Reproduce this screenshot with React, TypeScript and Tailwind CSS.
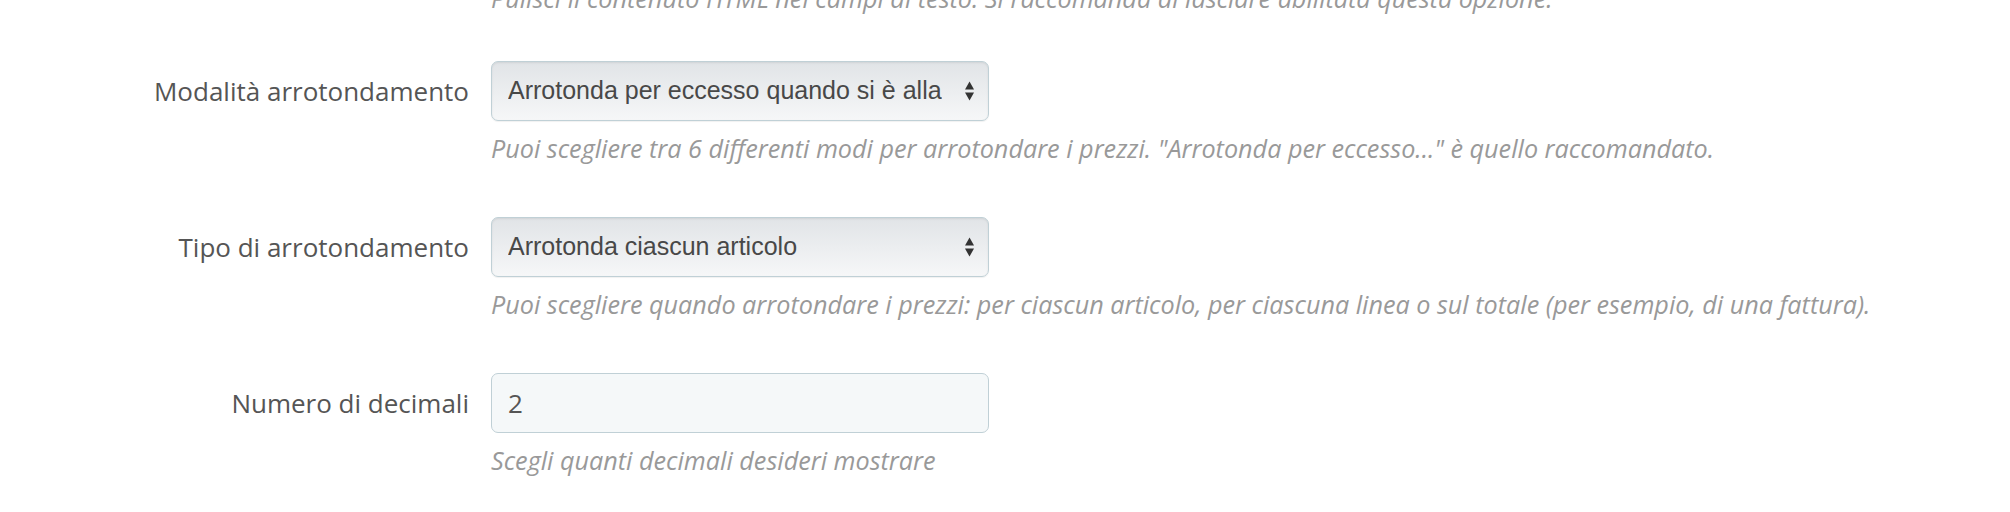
import React from 'react';

function SelectArrows() {
  return (
    <svg width="11" height="22" viewBox="0 0 11 22" className="shrink-0">
      <path d="M5.5 1.5 L10 9.5 L1 9.5 Z" fill="#333" />
      <path d="M5.5 20.5 L10 12.5 L1 12.5 Z" fill="#333" />
    </svg>
  );
}

function FakeSelect({ value }: { value: string }) {
  return (
    <div className="flex items-center justify-between w-[498px] h-[60px] pl-[16px] pr-[13px] rounded-[7px] border border-[#c0d0d6] bg-linear-to-b from-[#e1e4e7] to-[#f6f7f8] shadow-[inset_0_1px_2px_rgba(0,0,0,0.08),0_1px_1px_rgba(0,0,0,0.06)]">
      <span className="font-['Liberation_Sans',Arial,sans-serif] text-[25px] text-[#484848] whitespace-nowrap overflow-hidden">{value}</span>
      <SelectArrows />
    </div>
  );
}

function Help({ children }: { children: React.ReactNode }) {
  return (
    <p className="ml-[491px] mt-[9px] text-[25.2px] leading-[36px] italic text-[#999] whitespace-nowrap">{children}</p>
  );
}

function Row({ label, children }: { label: string; children: React.ReactNode }) {
  return (
    <div className="flex items-center">
      <label className="w-[469px] text-right text-[26px] text-[#555]">{label}</label>
      <div className="ml-[22px]">{children}</div>
    </div>
  );
}

export default function App() {
  return (
    <div className="w-[2010px] h-[512px] overflow-hidden bg-white font-['Open_Sans',sans-serif]">
      <p className="-mt-[20px] ml-[491px] text-[25.2px] leading-[36px] italic text-[#999] whitespace-nowrap">
        Pulisci il contenuto HTML nei campi di testo. Si raccomanda di lasciare abilitata questa opzione.
      </p>

      <div className="mt-[45px]">
        <Row label="Modalità arrotondamento">
          <FakeSelect value="Arrotonda per eccesso quando si è alla" />
        </Row>
        <Help>Puoi scegliere tra 6 differenti modi per arrotondare i prezzi. "Arrotonda per eccesso..." è quello raccomandato.</Help>
      </div>

      <div className="mt-[51px]">
        <Row label="Tipo di arrotondamento">
          <FakeSelect value="Arrotonda ciascun articolo" />
        </Row>
        <Help>Puoi scegliere quando arrotondare i prezzi: per ciascun articolo, per ciascuna linea o sul totale (per esempio, di una fattura).</Help>
      </div>

      <div className="mt-[51px]">
        <Row label="Numero di decimali">
          <input
            type="text"
            defaultValue="2"
            className="w-[498px] h-[60px] px-[16px] rounded-[7px] border border-[#c0d0d6] bg-[#f5f8f9] text-[26px] text-[#555] outline-none"
          />
        </Row>
        <Help>Scegli quanti decimali desideri mostrare</Help>
      </div>
    </div>
  );
}
